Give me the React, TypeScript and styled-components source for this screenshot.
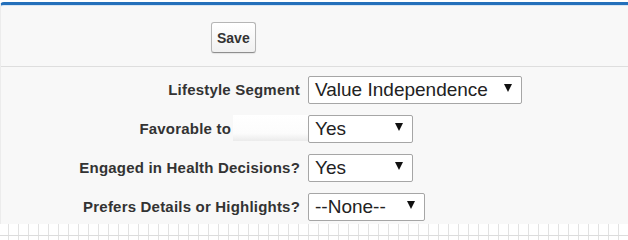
import React from 'react';
import styled, { createGlobalStyle } from 'styled-components';

const GlobalStyle = createGlobalStyle`
  html, body {
    margin: 0;
    padding: 0;
    background: #ffffff;
    font-family: "Liberation Sans", Arial, sans-serif;
  }
`;

const Page = styled.div`
  width: 628px;
  height: 240px;
  padding-top: 2px;
  box-sizing: border-box;
  display: flex;
  flex-direction: column;
  overflow: hidden;
`;

const Panel = styled.div`
  background: #f8f8f8;
  border-top: 3px solid #2470bb;
  border-left: 1px solid #ececec;
  border-radius: 4px 0 0 0;
  box-shadow: inset 0 1px 0 #d9e6f3;
`;

const ButtonBar = styled.div`
  display: flex;
  padding: 17px 0 13px 210px;
  border-bottom: 1px solid #dedede;
`;

const Button = styled.button`
  height: 31px;
  padding: 0 5px;
  font-family: "Liberation Sans", Arial, sans-serif;
  font-size: 14px;
  font-weight: bold;
  color: #333;
  background: linear-gradient(#ffffff, #f1f1f1);
  border: 1px solid #b5b5b5;
  border-bottom-color: #8f8f8f;
  border-radius: 3px;
  box-shadow: 0 1px 1px rgba(0, 0, 0, 0.08);
`;

const Form = styled.div`
  display: grid;
  grid-template-columns: 299px auto;
  column-gap: 8px;
  row-gap: 11px;
  align-items: center;
  padding: 9px 0 3px 0;
`;

const Label = styled.div`
  display: flex;
  justify-content: flex-end;
  align-items: center;
  margin-top: -2px;
  font-size: 15px;
  font-weight: bold;
  letter-spacing: 0.2px;
  color: #333;
  white-space: nowrap;
`;

const Redacted = styled.span`
  display: inline-block;
  width: 75px;
  height: 26px;
  margin-left: 2px;
  margin-right: -8px;
  background: linear-gradient(#ffffff, #fcfcfc 70%, #ebebeb);
`;

const Select = styled.div<{ $width: number }>`
  width: ${p => p.$width}px;
  height: 28px;
  box-sizing: border-box;
  display: flex;
  align-items: center;
  justify-content: space-between;
  padding: 0 9px 0 6px;
  background: #ffffff;
  border: 1px solid #a6a6a6;
  border-radius: 2px;
  font-size: 19px;
  color: #222;
`;

const Arrow = styled.span`
  width: 0;
  height: 0;
  border-left: 4px solid transparent;
  border-right: 4px solid transparent;
  border-top: 8px solid #111;
  margin-top: -4px;
`;

const Footer = styled.div`
  flex: 1;
  background:
    linear-gradient(#dcdcdc, #dcdcdc) 0 11px / 100% 1px no-repeat,
    repeating-linear-gradient(90deg, transparent 0 8px, #e2e2e2 8px 9px, transparent 9px 10px);
`;

const fields = [
  { label: 'Lifestyle Segment', value: 'Value Independence', width: 214 },
  { label: 'Favorable to', value: 'Yes', width: 105, redacted: true },
  { label: 'Engaged in Health Decisions?', value: 'Yes', width: 105 },
  { label: 'Prefers Details or Highlights?', value: '--None--', width: 117 },
];

export default function App() {
  return (
    <Page>
      <GlobalStyle />
      <Panel>
        <ButtonBar>
          <Button>Save</Button>
        </ButtonBar>
        <Form>
          {fields.map(f => (
            <React.Fragment key={f.label}>
              <Label>
                {f.label}
                {f.redacted && <Redacted />}
              </Label>
              <Select $width={f.width}>
                <span>{f.value}</span>
                <Arrow />
              </Select>
            </React.Fragment>
          ))}
        </Form>
      </Panel>
      <Footer />
    </Page>
  );
}
